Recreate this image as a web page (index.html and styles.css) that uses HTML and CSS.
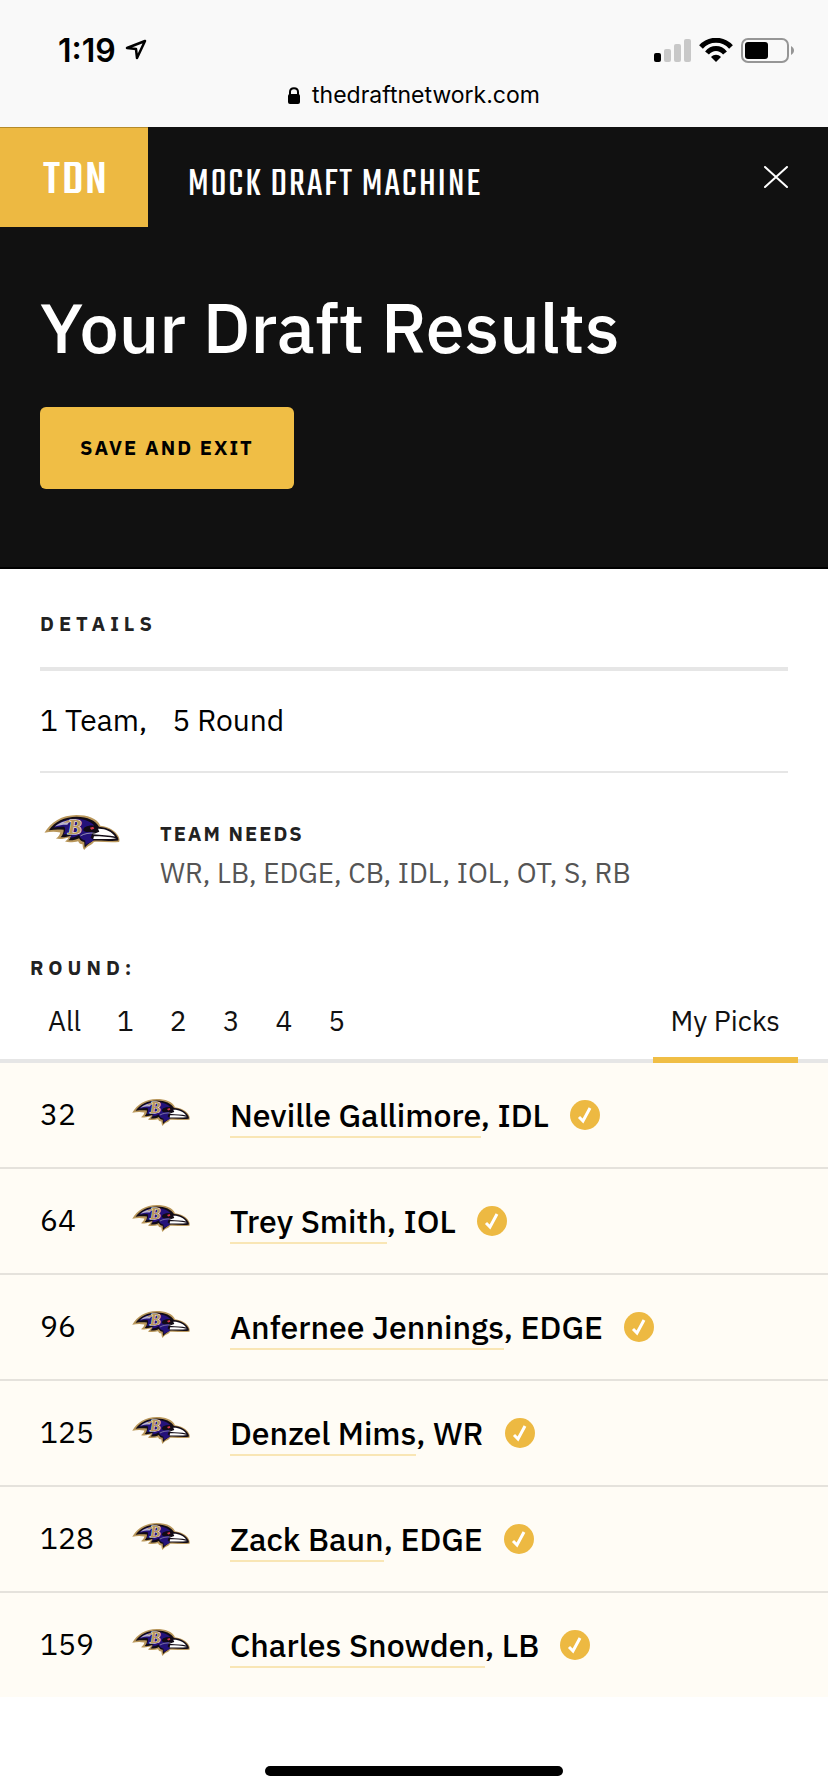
FILE: index.html
```html
<!DOCTYPE html>
<html lang="en">
<head>
    <meta charset="UTF-8">
    <meta name="viewport" content="width=device-width, initial-scale=1.0">
    <title>Mock Draft Machine</title>
    <link rel="stylesheet" href="styles.css">
</head>
<body>

    <!-- shared icons -->
    <svg class="sprite" aria-hidden="true">
        <symbol id="raven" viewBox="0 0 225 104">
            <path fill="#b9975b" d="M1 53C20 20 52 1 96 0c31 0 62 9 71 32 25 3 45 15 53 30 4 7 5 13 3 18-25 3-49-1-75 0-6 7-9 9-16 12-4 3-9 6-13 12-5-6-4-11-5-17-8-1-10-3-13-9-12 3-28 5-39 1 6-5 9-7 11-12-12 4-27 6-38 3 8-6 11-10 13-18C33 49 19 49 1 53z"/>
            <path fill="#120b16" d="M14 45C31 20 61 5 97 5c31 0 56 11 66 30 25 2 46 13 54 29 4 6 4 9 3 12-24 3-48-2-76 0-6 8-14 9-23 21-2-7-1-13-2-17-7-1-12-5-15-11-8 4-20 7-32 6 5-4 8-9 9-14-11 4-22 6-32 5 7-7 9-14 9-22-14-1-27-1-43 1z"/>
            <path fill="#24127a" d="M28 38C45 19 70 10 98 11c23 1 40 8 51 20l-25 4c-7 3-9 8-7 12 6 6 18 3 28 3l-7 17 10 8c-7 5-15 8-25 14l-1-13c-10-2-15-7-18-17-9 6-18 8-28 9 6-7 9-12 10-19-10 6-20 8-29 9 6-9 7-16 3-23-10-1-20 0-32 3z"/>
            <path fill="#b8b3cf" d="M32 34c18-14 35-19 57-19-12 4-18 9-20 14-9-1-23 1-37 5z"/>
            <path fill="#b9975b" d="M58 24c10-10 22-11 38-11l-6 9c-12-1-22-1-32 2z"/>
            <path fill="#120b16" d="M122 37c14-8 24-7 33 0l7 12-25 1z"/>
            <path fill="#d83a48" d="M136 38l10-3 3 6-9 3z"/>
            <path fill="#fff" d="M160 41c22-1 41 9 51 23-18-5-40-4-66-7l19-7z"/>
            <path fill="#fff" d="M148 63c22 0 44 1 66 6-20 4-44 2-68 2z"/>
            <path fill="none" stroke="#c8c8cc" stroke-width="2" d="M108 62c12-7 26-9 42-8"/>
        </symbol>
        <symbol id="check" viewBox="0 0 30 30">
            <circle cx="15" cy="15" r="15" fill="#edb942"/>
            <path fill="none" stroke="#fff" stroke-width="3" d="M9 17l4 4 7-13"/>
        </symbol>
    </svg>

    <div class="phone-bar">
        <div class="status">
            <div class="clock">
                <span>1:19</span>
                <svg width="22" height="22" viewBox="0 0 22 22" aria-hidden="true">
                    <path d="M20 2L2 9l9 1 1 9z" fill="none" stroke="#000" stroke-width="2.5" stroke-linejoin="round"/>
                </svg>
            </div>
            <div class="signals">
                <svg width="37" height="23" viewBox="0 0 37 23" aria-hidden="true">
                    <rect x="0" y="14" width="7" height="9" rx="2"/>
                    <rect x="10" y="10" width="7" height="13" rx="2" fill="#c8c8c8"/>
                    <rect x="20" y="5" width="7" height="18" rx="2" fill="#c8c8c8"/>
                    <rect x="30" y="0" width="7" height="23" rx="2" fill="#c8c8c8"/>
                </svg>
                <svg width="34" height="24" viewBox="0 0 34 24" aria-hidden="true">
                    <path d="M2 9C10 0 24 0 32 9M8 15c5-6 13-6 18 0" fill="none" stroke="#000" stroke-width="5"/>
                    <path d="M12 19c3-3 7-3 10 0l-5 5z"/>
                </svg>
                <svg width="53" height="25" viewBox="0 0 53 25" aria-hidden="true">
                    <rect x="1" y="1" width="46" height="23" rx="6" fill="none" stroke="#969696" stroke-width="2"/>
                    <rect x="4" y="4" width="23" height="17" rx="3"/>
                    <path d="M50 8c4 2 4 7 0 9z" fill="#969696"/>
                </svg>
            </div>
        </div>
        <div class="address">
            <svg width="12" height="17" viewBox="0 0 12 17" aria-hidden="true">
                <rect x="0" y="7" width="12" height="10" rx="2"/>
                <path d="M2 8V5c0-5 8-5 8 0v3" fill="none" stroke="#000" stroke-width="2"/>
            </svg>
            <span>thedraftnetwork.com</span>
        </div>
    </div>

    <header class="hero">
        <div class="top-bar">
            <a class="logo" href="#">TDN</a>
            <span class="site-name">MOCK DRAFT MACHINE</span>
            <button class="close-button" type="button" aria-label="Close">
                <svg width="24" height="22" viewBox="0 0 24 22" aria-hidden="true">
                    <path d="M1 1l22 20M23 1L1 21" stroke="#fff" stroke-width="2" stroke-linecap="round"/>
                </svg>
            </button>
        </div>
        <div class="hero-content">
            <h1>Your Draft Results</h1>
            <button class="save-button" type="button">SAVE AND EXIT</button>
        </div>
    </header>

    <main>
        <section class="details">
            <h2>DETAILS</h2>
            <p class="summary"><span>1 Team,</span><span>5 Round</span></p>
            <div class="team">
                <svg class="team-logo" viewBox="0 0 225 104" role="img" aria-label="Ravens"><use href="#raven"/><text class="raven-letter" x="70" y="55">B</text></svg>
                <div>
                    <h3>TEAM NEEDS</h3>
                    <p class="needs">WR, LB, EDGE, CB, IDL, IOL, OT, S, RB</p>
                </div>
            </div>
        </section>

        <section class="rounds">
            <h2>ROUND:</h2>
            <div class="tabs">
                <button class="tab" type="button">All</button>
                <button class="tab" type="button">1</button>
                <button class="tab" type="button">2</button>
                <button class="tab" type="button">3</button>
                <button class="tab" type="button">4</button>
                <button class="tab" type="button">5</button>
                <button class="tab my-picks active" type="button">My Picks</button>
            </div>
        </section>

        <table class="picks">
            <tbody>
                <tr>
                    <td class="pick">32</td>
                    <td class="pick-team"><svg viewBox="0 0 225 104" role="img" aria-label="Ravens"><use href="#raven"/><text class="raven-letter" x="70" y="55">B</text></svg></td>
                    <td class="player"><div><span><a href="#">Neville Gallimore</a>, IDL</span><svg class="check" aria-hidden="true"><use href="#check"/></svg></div></td>
                </tr>
                <tr>
                    <td class="pick">64</td>
                    <td class="pick-team"><svg viewBox="0 0 225 104" role="img" aria-label="Ravens"><use href="#raven"/><text class="raven-letter" x="70" y="55">B</text></svg></td>
                    <td class="player"><div><span><a href="#">Trey Smith</a>, IOL</span><svg class="check" aria-hidden="true"><use href="#check"/></svg></div></td>
                </tr>
                <tr>
                    <td class="pick">96</td>
                    <td class="pick-team"><svg viewBox="0 0 225 104" role="img" aria-label="Ravens"><use href="#raven"/><text class="raven-letter" x="70" y="55">B</text></svg></td>
                    <td class="player"><div><span><a href="#">Anfernee Jennings</a>, EDGE</span><svg class="check" aria-hidden="true"><use href="#check"/></svg></div></td>
                </tr>
                <tr>
                    <td class="pick">125</td>
                    <td class="pick-team"><svg viewBox="0 0 225 104" role="img" aria-label="Ravens"><use href="#raven"/><text class="raven-letter" x="70" y="55">B</text></svg></td>
                    <td class="player"><div><span><a href="#">Denzel Mims</a>, WR</span><svg class="check" aria-hidden="true"><use href="#check"/></svg></div></td>
                </tr>
                <tr>
                    <td class="pick">128</td>
                    <td class="pick-team"><svg viewBox="0 0 225 104" role="img" aria-label="Ravens"><use href="#raven"/><text class="raven-letter" x="70" y="55">B</text></svg></td>
                    <td class="player"><div><span><a href="#">Zack Baun</a>, EDGE</span><svg class="check" aria-hidden="true"><use href="#check"/></svg></div></td>
                </tr>
                <tr>
                    <td class="pick">159</td>
                    <td class="pick-team"><svg viewBox="0 0 225 104" role="img" aria-label="Ravens"><use href="#raven"/><text class="raven-letter" x="70" y="55">B</text></svg></td>
                    <td class="player"><div><span><a href="#">Charles Snowden</a>, LB</span><svg class="check" aria-hidden="true"><use href="#check"/></svg></div></td>
                </tr>
            </tbody>
        </table>
    </main>

    <div class="home-bar"></div>

</body>
</html>
```

FILE: styles.css
```css
* {
    box-sizing: border-box;
}
body {
    margin: 0;
    min-height: 100vh;
    display: flex;
    flex-direction: column;
    background: #fff;
    color: #000;
    font-family: "IBM Plex Sans", Roboto, sans-serif;
}
h1, h2, h3, p {
    margin: 0;
}
button {
    border: none;
    background: none;
    font-family: inherit;
    cursor: pointer;
}
a {
    color: inherit;
    text-decoration: none;
}
.sprite {
    position: absolute;
    width: 0;
    height: 0;
}
.raven-letter {
    font-family: "Liberation Serif", serif;
    font-size: 62px;
    font-weight: bold;
    font-style: italic;
    fill: #b9975b;
    stroke: #fff;
    stroke-width: 3px;
    paint-order: stroke;
}

/* phone status and address */
.phone-bar {
    background: #f9f9f9;
    height: 127px;
    padding-top: 30px;
    font-family: Inter, sans-serif;
}
.status {
    display: flex;
    justify-content: space-between;
    align-items: center;
    height: 40px;
    padding: 0 34px 0 58px;
}
.clock {
    display: flex;
    align-items: center;
    gap: 9px;
    font-size: 32px;
    font-weight: 600;
}
.signals {
    display: flex;
    align-items: center;
    gap: 8px;
}
.address {
    display: flex;
    justify-content: center;
    align-items: center;
    gap: 12px;
    height: 50px;
    font-size: 23px;
}

/* black header */
.hero {
    background: #111;
    color: #fff;
    border-bottom: 2px solid #000;
}
.top-bar {
    display: flex;
    height: 100px;
}
.logo {
    width: 148px;
    padding-left: 4px;
    background: #edb942;
    border-top: 1px solid #b58b2a;
    font-family: Teko, Roboto, sans-serif;
    font-size: 48px;
    font-weight: 500;
    line-height: 108px;
    letter-spacing: 2px;
    text-align: center;
}
.site-name {
    flex: 1;
    padding-left: 40px;
    font-family: Teko, Roboto, sans-serif;
    font-size: 40px;
    line-height: 118px;
    letter-spacing: 2px;
}
.close-button {
    padding: 0 40px;
}
.close-button svg {
    display: block;
}
.hero-content {
    padding: 60px 40px 78px;
}
h1 {
    font-size: 70px;
    font-weight: 500;
    line-height: 80px;
}
.save-button {
    margin-top: 40px;
    height: 82px;
    padding: 0 40px 2px;
    border-radius: 6px;
    background: #f0be45;
    color: #000;
    font-size: 20px;
    font-weight: bold;
    letter-spacing: 2px;
}

/* details */
.details {
    padding: 40px 40px 0;
}
h2 {
    font-size: 20px;
    font-weight: bold;
    line-height: 30px;
    letter-spacing: 5px;
    color: #222;
}
.details h2 {
    padding-bottom: 28px;
    border-bottom: 4px solid #e6e6e6;
}
.summary {
    display: flex;
    gap: 25px;
    padding: 29px 0 31px;
    border-bottom: 2px solid #e6e6e6;
    font-size: 30px;
    line-height: 40px;
}
.team {
    display: flex;
    gap: 40px;
    padding: 42px 4px 0;
}
.team-logo {
    width: 76px;
    height: 35px;
}
.team h3 {
    margin-top: 4px;
    font-size: 20px;
    line-height: 30px;
    letter-spacing: 2px;
    color: #222;
}
.needs {
    margin-top: 4px;
    font-size: 28px;
    line-height: 40px;
    color: #555;
}

/* round tabs */
.rounds {
    margin-top: 60px;
    padding: 0 30px;
    border-bottom: 4px solid #e6e6e6;
}
.tabs {
    display: flex;
    margin-bottom: -4px;
}
.tab {
    height: 80px;
    padding: 0 18px;
    border-bottom: 6px solid transparent;
    font-size: 28px;
    color: #111;
}
.my-picks {
    margin-left: auto;
}
.active {
    border-color: #f0be45;
}

/* picks */
.picks {
    width: 100%;
    border-spacing: 0;
    background: #fffcf5;
}
.picks tr {
    height: 106px;
}
.picks tr:last-child {
    height: 104px;
}
.picks td {
    padding: 0;
    border-bottom: 2px solid #e5e2dc;
}
.picks tr:last-child td {
    border-bottom: none;
}
.picks .pick {
    width: 132px;
    padding: 0 0 4px 40px;
    font-size: 30px;
}
.picks .pick-team {
    width: 98px;
}
.pick-team svg {
    display: block;
    width: 58px;
    height: 27px;
    margin-bottom: 6px;
}
.player {
    font-size: 32px;
    font-weight: 500;
}
.player div {
    display: flex;
    align-items: center;
    gap: 21px;
}
.player a {
    border-bottom: 2px solid #f9e6b5;
}
.check {
    width: 30px;
    height: 30px;
}

.home-bar {
    width: 36%;
    height: 10px;
    margin: auto auto 16px;
    border-radius: 5px;
    background: #000;
}
```
